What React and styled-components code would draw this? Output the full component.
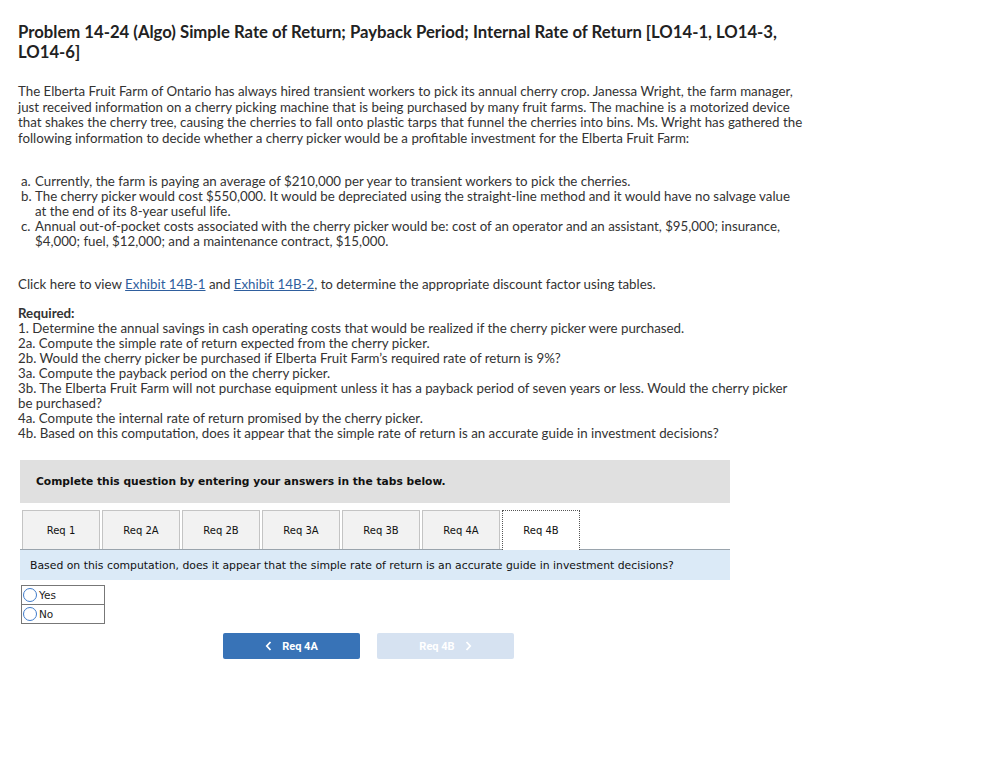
import styled, { createGlobalStyle } from "styled-components";

const Global = createGlobalStyle`
  body {
    margin: 0;
    background: #fff;
    font-family: Lato, "Open Sans", sans-serif;
    color: #333;
  }
`;

const Page = styled.div`
  padding: 22px 0 40px 18px;
  width: 800px;
`;

const Title = styled.h1`
  margin: 0;
  font-size: 16.7px;
  line-height: 20px;
  font-weight: 700;
  color: #222;
`;

const Para = styled.p`
  margin: ${({ $top }) => $top || 0}px 0 0;
  font-size: 13.3px;
  line-height: ${({ $lh }) => $lh || 15}px;
  white-space: nowrap;
`;

const List = styled.div`
  margin-top: 28px;
  padding-left: 3px;
  font-size: 13.3px;
  line-height: 15px;
`;

const Item = styled.div`
  display: flex;
  white-space: nowrap;
`;

const Marker = styled.span`
  width: 14px;
  flex: none;
`;

const Link = styled.a`
  color: #2f5f9e;
  text-decoration: underline;
`;

const Strong = styled.div`
  font-weight: 700;
`;

const Widget = styled.div`
  margin: 19px 0 0 2px;
  width: 710px;
  font-family: "DejaVu Sans", Verdana, sans-serif;
`;

const Banner = styled.div`
  background: #e0e0e0;
  height: 43px;
  display: flex;
  align-items: center;
  padding-left: 16px;
  font-size: 10.7px;
  font-weight: 700;
  color: #111;
`;

const Tabs = styled.div`
  display: flex;
  margin-top: 7px;
  padding-left: 2px;
  gap: 2px;
`;

const Tab = styled.div`
  width: 76px;
  height: 38px;
  display: flex;
  align-items: center;
  justify-content: center;
  font-size: 10px;
  color: #111;
  background: ${({ $active }) => ($active ? "#fff" : "#f2f2f2")};
  border: 1px solid #c4c4c4;
  border-bottom: none;
  ${({ $active }) =>
    $active &&
    `border: 1px dotted #555; border-bottom: none; height: 39px; margin-bottom: -1px; position: relative;`}
`;

const Prompt = styled.div`
  background: #dbeaf7;
  border-top: 1px solid #9aa4ad;
  height: 30px;
  display: flex;
  align-items: center;
  padding-left: 10px;
  font-size: 10.85px;
  color: #111;
`;

const Choices = styled.div`
  margin: 5px 0 0 1px;
  width: 82px;
  border: 1px solid #777;
`;

const Choice = styled.label`
  display: flex;
  align-items: center;
  height: 18px;
  font-size: 10.5px;
  color: #222;
  border-top: ${({ $first }) => ($first ? "none" : "1px solid #777")};
`;

const Radio = styled.span`
  width: 12px;
  height: 12px;
  border-radius: 50%;
  border: 1px solid #3f7bc9;
  margin: 0 2px 0 1px;
  background: #fff;
`;

const Nav = styled.div`
  display: flex;
  gap: 17px;
  margin: 9px 0 0 203px;
  font-family: Roboto, "Liberation Sans", sans-serif;
`;

const NavButton = styled.div`
  width: 137px;
  height: 26px;
  border-radius: 2px;
  display: flex;
  align-items: center;
  justify-content: center;
  gap: 10px;
  font-size: 11px;
  font-weight: 700;
  color: #fff;
  background: ${({ $disabled }) => ($disabled ? "#d6e2f1" : "#3873b7")};
`;

const Chevron = ({ dir }) => (
  <svg width="7" height="10" viewBox="0 0 7 10">
    <path
      d={dir === "left" ? "M5.5 1 L1.8 5 L5.5 9" : "M1.5 1 L5.2 5 L1.5 9"}
      fill="none"
      stroke="#fff"
      strokeWidth="1.8"
    />
  </svg>
);

const tabs = ["Req 1", "Req 2A", "Req 2B", "Req 3A", "Req 3B", "Req 4A", "Req 4B"];

export default function App() {
  return (
    <Page>
      <Global />
      <Title>
        Problem 14-24 (Algo) Simple Rate of Return; Payback Period; Internal Rate of Return [LO14-1, LO14-3,
        <br />
        LO14-6]
      </Title>

      <Para $top={22} $lh={15.5}>
        The Elberta Fruit Farm of Ontario has always hired transient workers to pick its annual cherry crop. Janessa Wright, the farm manager,
        <br />
        just received information on a cherry picking machine that is being purchased by many fruit farms. The machine is a motorized device
        <br />
        that shakes the cherry tree, causing the cherries to fall onto plastic tarps that funnel the cherries into bins. Ms. Wright has gathered the
        <br />
        following information to decide whether a cherry picker would be a profitable investment for the Elberta Fruit Farm:
      </Para>

      <List>
        <Item>
          <Marker>a.</Marker>
          <span>Currently, the farm is paying an average of $210,000 per year to transient workers to pick the cherries.</span>
        </Item>
        <Item>
          <Marker>b.</Marker>
          <span>
            The cherry picker would cost $550,000. It would be depreciated using the straight-line method and it would have no salvage value
            <br />
            at the end of its 8-year useful life.
          </span>
        </Item>
        <Item>
          <Marker>c.</Marker>
          <span>
            Annual out-of-pocket costs associated with the cherry picker would be: cost of an operator and an assistant, $95,000; insurance,
            <br />
            $4,000; fuel, $12,000; and a maintenance contract, $15,000.
          </span>
        </Item>
      </List>

      <Para $top={28}>
        Click here to view <Link>Exhibit 14B-1</Link> and <Link>Exhibit 14B-2</Link>, to determine the appropriate discount factor using tables.
      </Para>

      <Para $top={14}>
        <Strong>Required:</Strong>
        1. Determine the annual savings in cash operating costs that would be realized if the cherry picker were purchased.
        <br />
        2a. Compute the simple rate of return expected from the cherry picker.
        <br />
        2b. Would the cherry picker be purchased if Elberta Fruit Farm’s required rate of return is 9%?
        <br />
        3a. Compute the payback period on the cherry picker.
        <br />
        3b. The Elberta Fruit Farm will not purchase equipment unless it has a payback period of seven years or less. Would the cherry picker
        <br />
        be purchased?
        <br />
        4a. Compute the internal rate of return promised by the cherry picker.
        <br />
        4b. Based on this computation, does it appear that the simple rate of return is an accurate guide in investment decisions?
      </Para>

      <Widget>
        <Banner>Complete this question by entering your answers in the tabs below.</Banner>
        <Tabs>
          {tabs.map((t) => (
            <Tab key={t} $active={t === "Req 4B"}>
              {t}
            </Tab>
          ))}
        </Tabs>
        <Prompt>
          Based on this computation, does it appear that the simple rate of return is an accurate guide in investment decisions?
        </Prompt>
        <Choices>
          <Choice $first>
            <Radio />
            Yes
          </Choice>
          <Choice>
            <Radio />
            No
          </Choice>
        </Choices>
        <Nav>
          <NavButton>
            <Chevron dir="left" />
            Req 4A
          </NavButton>
          <NavButton $disabled>
            Req 4B
            <Chevron dir="right" />
          </NavButton>
        </Nav>
      </Widget>
    </Page>
  );
}
